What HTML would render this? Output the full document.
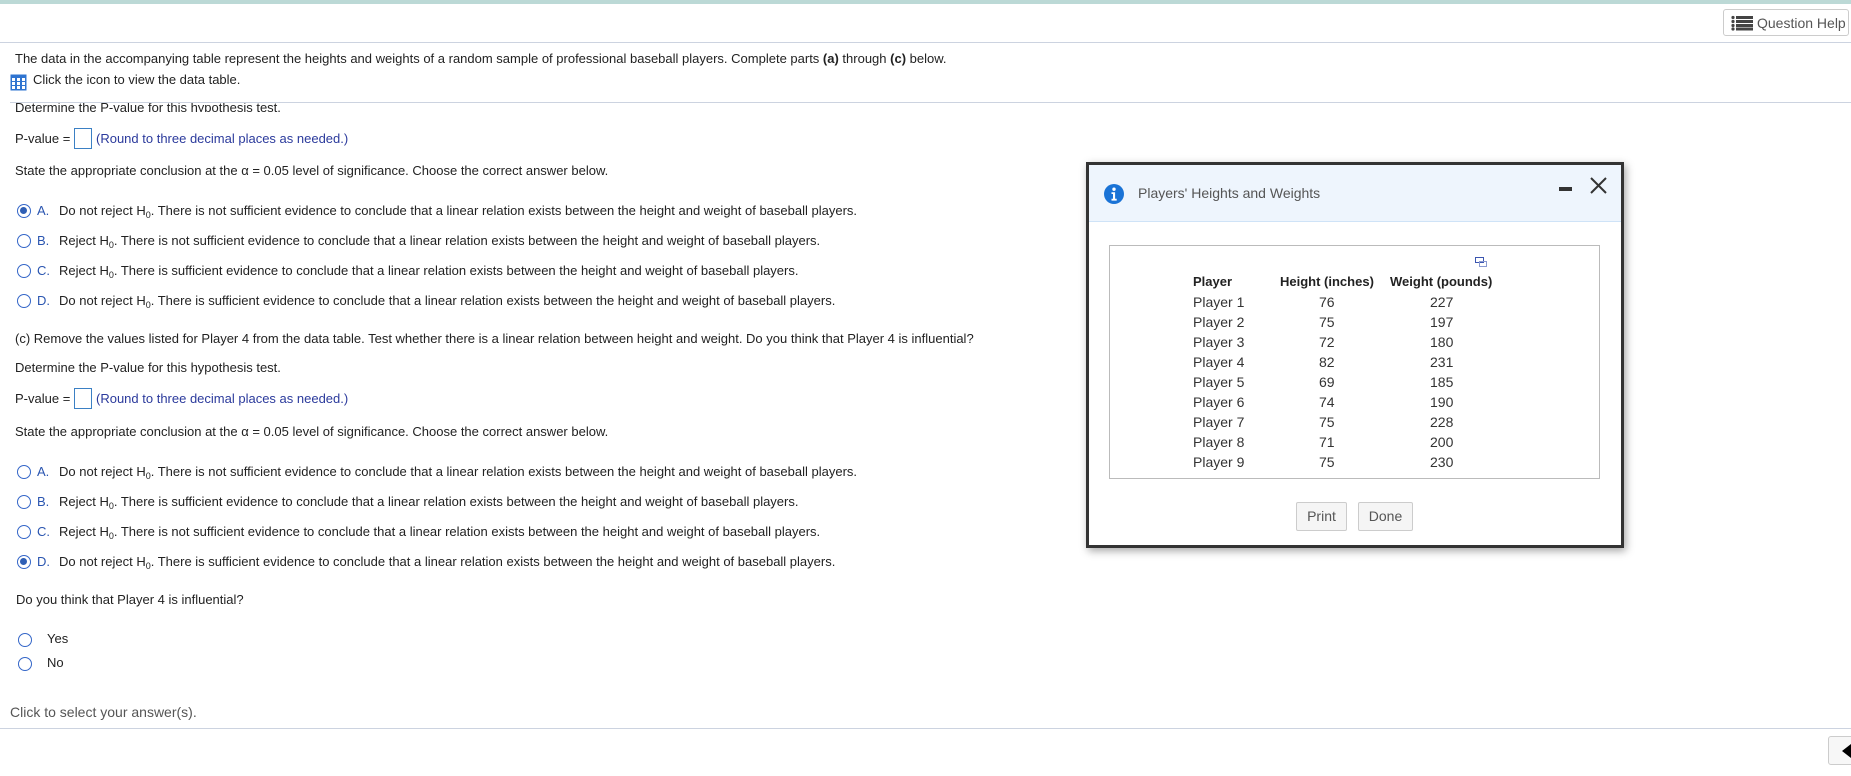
<!DOCTYPE html>
<html><head><meta charset="utf-8">
<style>
*{margin:0;padding:0;box-sizing:border-box}
body{width:1851px;height:776px;position:relative;background:#fff;font-family:"Liberation Sans",Arial,sans-serif;font-size:13px;color:#222;overflow:hidden}
.a{position:absolute;white-space:nowrap}
.t{position:absolute;white-space:nowrap;line-height:16px}
sub{font-size:9px;vertical-align:-3px;line-height:0}
.r{position:absolute;width:14px;height:14px;border:1.5px solid #3466c8;border-radius:50%}
.r.on::after{content:"";position:absolute;left:2px;top:2px;width:7px;height:7px;border-radius:50%;background:#2f5fb5}
.L{color:#2a55b0}
.blue{color:#2b3a9c}
.box{position:absolute;width:18px;height:21px;border:1.5px solid #3b80c4;background:#fff}
.row{position:absolute;left:1193px;width:400px;font-size:14px;color:#333;line-height:20px}
.row span{position:absolute}
</style></head><body>
<div class="a" style="left:0;top:0;width:1851px;height:4px;background:#bcd9d6"></div>
<div class="a" style="left:1723px;top:9px;width:126px;height:27px;border:1px solid #ccc;border-radius:3px;background:#fff"></div>
<svg class="a" style="left:1731px;top:15px" width="22" height="16" viewBox="0 0 22 16"><g fill="#444"><circle cx="2" cy="2.5" r="1.6"/><circle cx="2" cy="6.5" r="1.6"/><circle cx="2" cy="10.5" r="1.6"/><circle cx="2" cy="14" r="1.6"/><rect x="5" y="1" width="17" height="3"/><rect x="5" y="5" width="17" height="3"/><rect x="5" y="9" width="17" height="3"/><rect x="5" y="12.5" width="17" height="3"/></g></svg>
<div class="t" style="left:1757px;top:15px;font-size:14px;color:#555">Question Help</div>
<div class="a" style="left:0;top:42px;width:1851px;height:1px;background:#ccd3e0"></div>

<div class="t" style="left:15px;top:51px">The data in the accompanying table represent the heights and weights of a random sample of professional baseball players. Complete parts <b>(a)</b> through <b>(c)</b> below.</div>
<svg class="a" style="left:10px;top:74px" width="17" height="17" viewBox="0 0 17 17"><rect x="0.5" y="0.5" width="16" height="16" fill="#2f74d0"/><g fill="#fff"><rect x="2" y="4" width="3" height="3"/><rect x="7" y="4" width="3" height="3"/><rect x="12" y="4" width="3" height="3"/><rect x="2" y="8" width="3" height="3"/><rect x="7" y="8" width="3" height="3"/><rect x="12" y="8" width="3" height="3"/><rect x="2" y="12" width="3" height="3"/><rect x="7" y="12" width="3" height="3"/><rect x="12" y="12" width="3" height="3"/></g></svg>
<div class="t" style="left:33px;top:72px">Click the icon to view the data table.</div>
<div class="a" style="left:10px;top:102px;width:1841px;height:1px;background:#ccd3e0"></div>
<div class="a" style="left:0;top:103px;width:1851px;height:9px;overflow:hidden"><div class="t" style="left:15px;top:-3px">Determine the P-value for this hypothesis test.</div></div>

<div class="t" style="left:15px;top:131px">P-value =</div><div class="box" style="left:74px;top:128px"></div><div class="t blue" style="left:96px;top:131px">(Round to three decimal places as needed.)</div>
<div class="t" style="left:15px;top:163px">State the appropriate conclusion at the α = 0.05 level of significance. Choose the correct answer below.</div>

<div class="r on" style="left:17px;top:204px"></div><div class="t L" style="left:37px;top:203px">A.</div><div class="t" style="left:59px;top:203px">Do not reject H<sub>0</sub>. There is not sufficient evidence to conclude that a linear relation exists between the height and weight of baseball players.</div>
<div class="r" style="left:17px;top:234px"></div><div class="t L" style="left:37px;top:233px">B.</div><div class="t" style="left:59px;top:233px">Reject H<sub>0</sub>. There is not sufficient evidence to conclude that a linear relation exists between the height and weight of baseball players.</div>
<div class="r" style="left:17px;top:264px"></div><div class="t L" style="left:37px;top:263px">C.</div><div class="t" style="left:59px;top:263px">Reject H<sub>0</sub>. There is sufficient evidence to conclude that a linear relation exists between the height and weight of baseball players.</div>
<div class="r" style="left:17px;top:294px"></div><div class="t L" style="left:37px;top:293px">D.</div><div class="t" style="left:59px;top:293px">Do not reject H<sub>0</sub>. There is sufficient evidence to conclude that a linear relation exists between the height and weight of baseball players.</div>

<div class="t" style="left:15px;top:331px">(c) Remove the values listed for Player 4 from the data table. Test whether there is a linear relation between height and weight. Do you think that Player 4 is influential?</div>
<div class="t" style="left:15px;top:360px">Determine the P-value for this hypothesis test.</div>
<div class="t" style="left:15px;top:391px">P-value =</div><div class="box" style="left:74px;top:388px"></div><div class="t blue" style="left:96px;top:391px">(Round to three decimal places as needed.)</div>
<div class="t" style="left:15px;top:424px">State the appropriate conclusion at the α = 0.05 level of significance. Choose the correct answer below.</div>

<div class="r" style="left:17px;top:465px"></div><div class="t L" style="left:37px;top:464px">A.</div><div class="t" style="left:59px;top:464px">Do not reject H<sub>0</sub>. There is not sufficient evidence to conclude that a linear relation exists between the height and weight of baseball players.</div>
<div class="r" style="left:17px;top:495px"></div><div class="t L" style="left:37px;top:494px">B.</div><div class="t" style="left:59px;top:494px">Reject H<sub>0</sub>. There is sufficient evidence to conclude that a linear relation exists between the height and weight of baseball players.</div>
<div class="r" style="left:17px;top:525px"></div><div class="t L" style="left:37px;top:524px">C.</div><div class="t" style="left:59px;top:524px">Reject H<sub>0</sub>. There is not sufficient evidence to conclude that a linear relation exists between the height and weight of baseball players.</div>
<div class="r on" style="left:17px;top:555px"></div><div class="t L" style="left:37px;top:554px">D.</div><div class="t" style="left:59px;top:554px">Do not reject H<sub>0</sub>. There is sufficient evidence to conclude that a linear relation exists between the height and weight of baseball players.</div>

<div class="t" style="left:16px;top:592px">Do you think that Player 4 is influential?</div>
<div class="r" style="left:18px;top:633px"></div><div class="t" style="left:47px;top:631px">Yes</div>
<div class="r" style="left:18px;top:657px"></div><div class="t" style="left:47px;top:655px">No</div>
<div class="t" style="left:10px;top:704px;font-size:14px;color:#555">Click to select your answer(s).</div>
<div class="a" style="left:0;top:728px;width:1851px;height:1px;background:#ccd3e0"></div>
<div class="a" style="left:1828px;top:736px;width:30px;height:29px;border:1px solid #ccc;border-radius:3px;background:#f7f7f7"></div>
<div class="a" style="left:1842px;top:744px;width:0;height:0;border-top:7px solid transparent;border-bottom:7px solid transparent;border-right:9px solid #000"></div>

<!-- modal -->
<div class="a" style="left:1086px;top:162px;width:538px;height:386px;border:3px solid #333;background:#fff;box-shadow:2px 3px 8px rgba(0,0,0,.35)">
 <div class="a" style="left:0;top:0;width:532px;height:57px;background:#eef5fd;border-bottom:1px solid #cfe3f7"></div>
</div>
<svg class="a" style="left:1104px;top:184px" width="20" height="20" viewBox="0 0 20 20"><circle cx="10" cy="10" r="10" fill="#1a73d6"/><circle cx="10" cy="5.2" r="1.7" fill="#fff"/><path d="M7.5 8.3h3.6v6.5h1.6v1.8H7.5v-1.8h1.5V10H7.5z" fill="#fff"/></svg>
<div class="t" style="left:1138px;top:185px;font-size:14px;color:#555">Players' Heights and Weights</div>
<div class="a" style="left:1559px;top:187px;width:13px;height:4px;background:#333"></div>
<svg class="a" style="left:1590px;top:177px" width="17" height="17" viewBox="0 0 17 17"><path d="M1 1L16 16M16 1L1 16" stroke="#333" stroke-width="2"/></svg>
<div class="a" style="left:1109px;top:245px;width:491px;height:234px;border:1px solid #bbb"></div>
<svg class="a" style="left:1475px;top:257px" width="12" height="10" viewBox="0 0 12 10"><rect x="0.5" y="0.5" width="8" height="5" fill="none" stroke="#3b55b0"/><rect x="4.5" y="4.5" width="7" height="5" fill="none" stroke="#8a9ad0"/></svg>
<div class="row" style="top:272px;font-weight:bold;color:#222;font-size:13px"><span style="left:0">Player</span><span style="left:87px">Height (inches)</span><span style="left:197px">Weight (pounds)</span></div>
<div class="row" style="top:292px"><span style="left:0">Player 1</span><span style="left:126px">76</span><span style="left:237px">227</span></div>
<div class="row" style="top:312px"><span style="left:0">Player 2</span><span style="left:126px">75</span><span style="left:237px">197</span></div>
<div class="row" style="top:332px"><span style="left:0">Player 3</span><span style="left:126px">72</span><span style="left:237px">180</span></div>
<div class="row" style="top:352px"><span style="left:0">Player 4</span><span style="left:126px">82</span><span style="left:237px">231</span></div>
<div class="row" style="top:372px"><span style="left:0">Player 5</span><span style="left:126px">69</span><span style="left:237px">185</span></div>
<div class="row" style="top:392px"><span style="left:0">Player 6</span><span style="left:126px">74</span><span style="left:237px">190</span></div>
<div class="row" style="top:412px"><span style="left:0">Player 7</span><span style="left:126px">75</span><span style="left:237px">228</span></div>
<div class="row" style="top:432px"><span style="left:0">Player 8</span><span style="left:126px">71</span><span style="left:237px">200</span></div>
<div class="row" style="top:452px"><span style="left:0">Player 9</span><span style="left:126px">75</span><span style="left:237px">230</span></div>
<div class="a" style="left:1296px;top:502px;width:51px;height:29px;border:1px solid #ccc;border-radius:2px;background:#f5f5f5;font-size:14px;color:#555;text-align:center;line-height:27px">Print</div>
<div class="a" style="left:1358px;top:502px;width:55px;height:29px;border:1px solid #ccc;border-radius:2px;background:#f5f5f5;font-size:14px;color:#555;text-align:center;line-height:27px">Done</div>
</body></html>
